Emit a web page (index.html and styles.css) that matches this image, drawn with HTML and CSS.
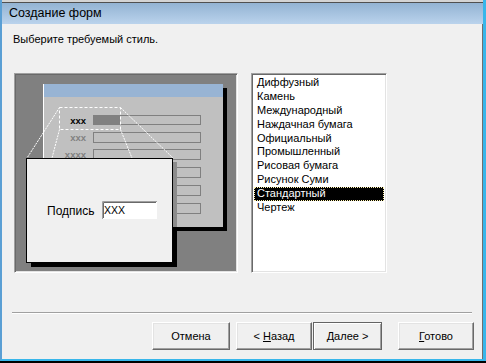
FILE: index.html
```html
<!DOCTYPE html>
<html lang="ru">
  <head>
    <meta charset="UTF-8" />
    <title>Создание форм</title>
    <link rel="stylesheet" href="styles.css">
  </head>
  <body>
    <div class="window">
      <div class="topedge"></div>
      <div class="titlebar">Создание форм</div>

      <div class="client">
        <p class="prompt">Выберите требуемый стиль.</p>

        <div class="main">
          <div class="preview">
            <svg width="220" height="196" viewBox="16 75 220 196">
              <!-- mock form with shadow -->
              <rect x="47" y="88" width="180" height="143" fill="#000" />
              <rect x="43" y="84" width="180" height="143" fill="#c0c0c0" />
              <rect x="44" y="84" width="179" height="13" fill="#98b4d4" />
              <rect x="43" y="84" width="1" height="143" fill="#fff" />

              <rect x="93.5" y="115.5" width="107" height="9" fill="none" stroke="#808080" />
              <rect x="93" y="115" width="27" height="10" fill="#808080" />
              <rect x="93.5" y="132.5" width="107" height="10" fill="none" stroke="#808080" />
              <rect x="93.5" y="149.5" width="107" height="10" fill="none" stroke="#808080" />
              <rect x="93.5" y="167.5" width="107" height="10" fill="none" stroke="#808080" />
              <rect x="93.5" y="185.5" width="107" height="10" fill="none" stroke="#808080" />
              <rect x="93.5" y="203.5" width="107" height="10" fill="none" stroke="#808080" />

              <text class="mock-label" x="86" y="124" fill="#000">xxx</text>
              <text class="mock-label" x="86" y="141" fill="#808080">xxx</text>
              <text class="mock-label" x="86" y="158" fill="#808080">xxxx</text>

              <!-- selection and zoom lines -->
              <rect x="59.5" y="107.5" width="61" height="22" fill="none" stroke="#fff" stroke-dasharray="3 2" />
              <g stroke="#fff" stroke-dasharray="2 1">
                <line x1="59.5" y1="107.5" x2="27" y2="158" />
                <line x1="59.5" y1="129.5" x2="52" y2="158" />
                <line x1="120.5" y1="107.5" x2="173" y2="158" />
                <line x1="120.5" y1="129.5" x2="132" y2="158" />
              </g>

              <!-- zoomed detail -->
              <rect x="31" y="162" width="146" height="105" fill="#000" />
              <rect x="173" y="162" width="4" height="65" fill="#8c8c8c" />
              <rect x="26.5" y="158.5" width="146" height="104" fill="#f0f0f0" stroke="#000" />
              <text class="detail-label" x="47" y="215">Подпись</text>
              <rect x="102" y="201" width="55" height="18" fill="#fff" />
              <path d="M102.5 219 V201.5 H157" fill="none" stroke="#a0a0a0" />
              <path d="M103.5 218 V202.5 H156" fill="none" stroke="#696969" />
              <text class="detail-value" x="104" y="214">XXX</text>
            </svg>
          </div>

          <ul class="styles">
            <li>Диффузный</li>
            <li>Камень</li>
            <li>Международный</li>
            <li>Наждачная бумага</li>
            <li>Официальный</li>
            <li>Промышленный</li>
            <li>Рисовая бумага</li>
            <li>Рисунок Суми</li>
            <li class="selected">Стандартный</li>
            <li>Чертеж</li>
          </ul>
        </div>

        <div class="separator"></div>

        <div class="buttons">
          <button class="btn btn-cancel">Отмена</button>
          <button class="btn btn-back">&lt; <u>Н</u>азад</button>
          <button class="btn btn-next default"><u>Д</u>алее &gt;</button>
          <button class="btn btn-finish"><u>Г</u>отово</button>
        </div>
      </div>
    </div>
  </body>
</html>
```

FILE: styles.css
```css
body {
  margin: 0;
  background: #000;
  font-family: "Liberation Sans", sans-serif;
  font-size: 11px;
  color: #000;
}

.window {
  width: 486px;
  height: 361px;
  box-sizing: border-box;
  border-left: 2px solid #5a9fd4;
  border-right: 3px solid #38b6ea;
  border-bottom: 2px solid #38b6ea;
  background: #f0f0f0;
}

.topedge {
  height: 2px;
  background: #d4d4d4;
  border-bottom: 1px solid #505050;
}

.titlebar {
  height: 21px;
  line-height: 21px;
  padding-left: 7px;
  font-size: 12.5px;
  background: linear-gradient(#93b3d3, #bad3ec);
}

.client {
  height: 335px;
  border-right: 1px solid #707070;
}

.prompt {
  margin: 0;
  height: 49px;
  box-sizing: border-box;
  padding: 8px 11px 0;
  line-height: 14px;
}

.main {
  display: flex;
  gap: 13px;
  padding-left: 12px;
  height: 200px;
}

.preview {
  width: 224px;
  height: 200px;
  box-sizing: border-box;
  border: 1px solid;
  border-color: #a0a0a0 #fff #fff #a0a0a0;
  box-shadow: inset 1px 1px #696969, inset -1px -1px #e3e3e3;
  padding: 1px;
  background: #808080;
}

.preview svg {
  display: block;
}

.mock-label {
  font-family: "Liberation Sans", sans-serif;
  font-size: 9.5px;
  font-weight: bold;
  text-anchor: end;
}

.detail-label {
  font-family: "Liberation Sans", sans-serif;
  font-size: 12px;
}

.detail-value {
  font-family: "Liberation Sans", sans-serif;
  font-size: 10.5px;
}

.styles {
  list-style: none;
  margin: 0;
  width: 136px;
  height: 200px;
  box-sizing: border-box;
  padding: 2px;
  border: 1px solid;
  border-color: #a0a0a0 #fff #fff #a0a0a0;
  box-shadow: inset 1px 1px #696969, inset -1px -1px #e3e3e3;
  background: #fff;
}

.styles li {
  height: 13.9px;
  line-height: 13.9px;
  padding-left: 3px;
  white-space: nowrap;
}

.styles li.selected {
  background: #000;
  color: #fff;
  outline: 1px dotted #fff3b0;
  outline-offset: -1px;
}

.separator {
  margin: 39px 0 0 10px;
  width: 460px;
  height: 1px;
  background: #a0a0a0;
  border-bottom: 1px solid #fff;
}

.buttons {
  display: flex;
  justify-content: flex-end;
  padding-right: 8px;
  margin-top: 8px;
}

.btn {
  height: 28px;
  padding: 0;
  font-family: "Liberation Sans", sans-serif;
  font-size: 11px;
  color: #000;
  background: #f0f0f0;
  border: 1px solid;
  border-color: #fff #696969 #696969 #fff;
  box-shadow: inset -1px -1px #a0a0a0, inset 1px 1px #e3e3e3;
}

.btn-cancel { width: 78px; margin-right: 6px; }
.btn-back { width: 76px; margin-right: 1px; }
.btn-next { width: 69px; margin-right: 16px; }
.btn-finish { width: 76px; }

.btn.default {
  border-color: #646464;
  box-shadow: inset 1px 1px #fff, inset -1px -1px #a0a0a0;
}
```
